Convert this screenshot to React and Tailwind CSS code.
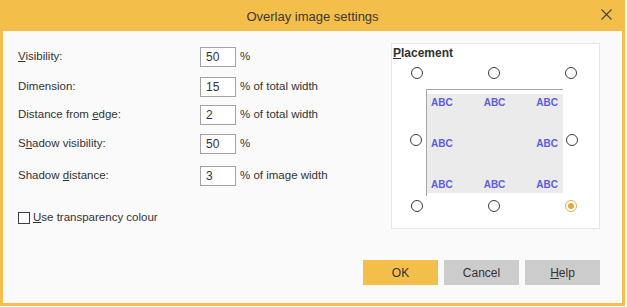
import React from 'react'

const font = { fontFamily: '"Liberation Sans", Arial, sans-serif' }

function Radio({ checked }) {
  if (checked) {
    return (
      <span className="w-[12px] h-[12px] rounded-full border border-[#e3ad45] bg-white flex items-center justify-center">
        <span className="w-[6px] h-[6px] rounded-full bg-[#dfa73c]" />
      </span>
    )
  }
  return <span className="w-[12px] h-[12px] rounded-full border border-[#3a3a4a] bg-white" />
}

function Row({ label, value, unit, className }) {
  return (
    <div className={`flex items-center h-[20px] ${className}`}>
      <div className="w-[182px]">{label}</div>
      <div className="w-[36px] h-[20px] border border-[#a3a3a3] bg-white pl-[5px] flex items-center text-[12px]">
        {value}
      </div>
      <div className="ml-[4px]">{unit}</div>
    </div>
  )
}

export default function App() {
  return (
    <div className="w-[627px] h-[307px] bg-[#fafafa] text-[#333] text-[11.5px]" style={font}>
      <div className="w-[625px] h-[306px] bg-[#f4be4a] flex flex-col">
        <div className="h-[31px] flex items-center justify-center relative shrink-0">
          <span className="text-[13px] text-[#3a3a3a] pt-[2px]">Overlay image settings</span>
          <svg className="absolute right-[13px] top-[9px]" width="11" height="11" viewBox="0 0 11 11">
            <path d="M0.5 0.5 L10.5 10.5 M10.5 0.5 L0.5 10.5" stroke="#444" strokeWidth="1.1" fill="none" />
          </svg>
        </div>

        <div className="flex-1 mx-[3px] mb-[3px] bg-[#fafafa] flex flex-col">
          <div className="flex h-[198px]">
            <div className="w-[388px] pl-[15px] pt-[16px]">
              <Row label={<span><u>V</u>isibility:</span>} value="50" unit="%" />
              <Row className="mt-[10px]" label="Dimension:" value="15" unit="% of total width" />
              <Row className="mt-[8px]" label={<span>Distance from <u>e</u>dge:</span>} value="2" unit="% of total width" />
              <Row className="mt-[9px]" label={<span>S<u>h</u>adow visibility:</span>} value="50" unit="%" />
              <Row className="mt-[12px]" label={<span>Shadow <u>d</u>istance:</span>} value="3" unit="% of image width" />
              <div className="flex items-center mt-[23px]">
                <span className="w-[12px] h-[12px] border border-[#3a3a4a] bg-white" />
                <span className="ml-[3px]"><u>U</u>se transparency colour</span>
              </div>
            </div>

            <div className="mt-[12px] w-[209px] h-[186px] border border-[#e6e6e6] bg-white relative">
              <div className="pl-[1px] h-[17px] flex items-center font-bold text-[12px] text-[#333]">
                <span><u>P</u>lacement</span>
              </div>
              <div className="mt-[6px] ml-[19px] w-[166px] flex justify-between">
                <Radio /><Radio /><Radio />
              </div>
              <div className="mt-[55px] ml-[18px] w-[168px] flex justify-between">
                <Radio /><Radio />
              </div>
              <div className="mt-[54px] ml-[19px] w-[166px] flex justify-between">
                <Radio /><Radio /><Radio checked />
              </div>

              <div className="absolute left-[34px] top-[45px] w-[137px] h-[107px] border-l border-t border-[#a6a6a6]">
                <div className="mt-[4px] w-[136px] h-[99px] bg-[#ebebeb] pl-[4px] pr-[5px] pt-[3px] pb-[2px] flex flex-col justify-between font-bold text-[10px] leading-[12px] text-[#5d5ddb]">
                  <div className="flex justify-between"><span>ABC</span><span>ABC</span><span>ABC</span></div>
                  <div className="flex justify-between"><span>ABC</span><span>ABC</span></div>
                  <div className="flex justify-between"><span>ABC</span><span>ABC</span><span>ABC</span></div>
                </div>
              </div>
            </div>
          </div>

          <div className="mt-[31px] flex justify-end gap-[6px] pr-[22px] text-[12px]">
            <div className="w-[75px] h-[25px] bg-[#f4be4a] flex items-center justify-center">OK</div>
            <div className="w-[75px] h-[25px] bg-[#cccccc] flex items-center justify-center">Cancel</div>
            <div className="w-[75px] h-[25px] bg-[#cccccc] flex items-center justify-center"><span><u>H</u>elp</span></div>
          </div>
        </div>
      </div>
    </div>
  )
}
